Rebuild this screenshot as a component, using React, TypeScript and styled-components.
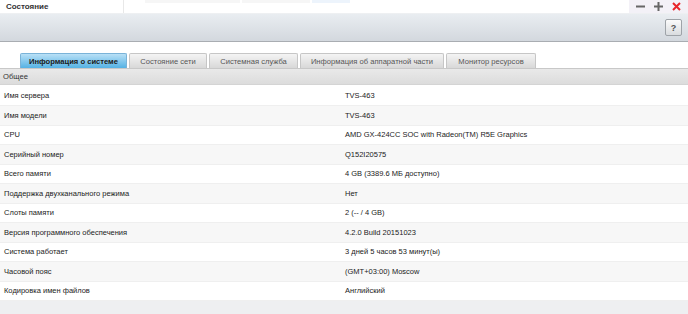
import React from "react";
import styled, { createGlobalStyle } from "styled-components";

const Global = createGlobalStyle`
  html, body { margin: 0; padding: 0; background: #ffffff; }
  body { font-family: "Liberation Sans", Arial, sans-serif; font-size: 8px; color: #222; }
  #root { width: 688px; height: 314px; overflow: hidden; }
`;

const Page = styled.div`
  width: 688px;
  height: 314px;
  display: flex;
  flex-direction: column;
  background: #eeeff1;
  overflow: hidden;
`;

const TitleBar = styled.div`
  height: 13px;
  display: flex;
  align-items: stretch;
  background: #fff;
  border-bottom: 1px solid #eef0f2;
`;

const TitleCell = styled.div`
  width: 117px;
  padding-left: 6px;
  display: flex;
  align-items: center;
  font-weight: bold;
  font-size: 8px;
  color: #333;
  border-right: 1px solid #e8e8e8;
`;

const TitleMiddle = styled.div`
  flex: 1;
  display: flex;
  align-items: flex-start;
  padding-left: 21px;
`;

const Strip = styled.div<{ $w: number; $c: string }>`
  width: ${(p) => p.$w}px;
  height: 3px;
  margin-right: 2px;
  background: ${(p) => p.$c};
`;

const WinControls = styled.div`
  width: 55px;
  display: flex;
  align-items: center;
  justify-content: space-around;
  background: #f3f1f7;
  padding: 0 2px;
`;

const Toolbar = styled.div`
  height: 27px;
  display: flex;
  align-items: center;
  justify-content: flex-end;
  padding-right: 6px;
  background: linear-gradient(#e9edf1, #d3d8de);
  border-bottom: 1px solid #a9adb2;
`;

const HelpButton = styled.div`
  width: 15px;
  height: 15px;
  border: 1px solid #9ea3a8;
  border-radius: 2px;
  background: linear-gradient(#fbfbfb, #d9dcdf);
  display: flex;
  align-items: center;
  justify-content: center;
  font-size: 9px;
  font-weight: bold;
  color: #555;
`;

const Content = styled.div`
  flex: 1;
  background: #fff;
  padding-top: 11px;
  display: flex;
  flex-direction: column;
`;

const Tabs = styled.div`
  display: flex;
  padding-left: 20px;
  gap: 2px;
  height: 15px;
`;

const Tab = styled.div<{ $active?: boolean; $w: number }>`
  width: ${(p) => p.$w}px;
  height: 15px;
  box-sizing: border-box;
  display: flex;
  align-items: center;
  justify-content: center;
  font-size: 7.6px;
  border: 1px solid ${(p) => (p.$active ? "#7ab3d8" : "#c6c6c6")};
  border-bottom: none;
  border-radius: 2px 2px 0 0;
  font-weight: ${(p) => (p.$active ? "bold" : "normal")};
  color: ${(p) => (p.$active ? "#1b1b1b" : "#555")};
  background: ${(p) =>
    p.$active
      ? "linear-gradient(#b9e0f6, #55b2e4)"
      : "linear-gradient(#f4f4f4, #d8d8d8)"};
`;

const SectionHeader = styled.div`
  height: 15px;
  display: flex;
  align-items: center;
  padding-left: 3px;
  font-size: 7.6px;
  color: #333;
  background: linear-gradient(#e9e9e9, #dcdcdc);
  border-top: 1px solid #c8c8c8;
  border-bottom: 1px solid #d4d4d4;
  margin-bottom: 1.5px;
`;

const Row = styled.div<{ $alt: boolean }>`
  height: 19.5px;
  box-sizing: border-box;
  display: grid;
  grid-template-columns: 345px 1fr;
  align-items: center;
  background: ${(p) => (p.$alt ? "#f7f7f7" : "#ffffff")};
  border-bottom: 1px solid #efefef;
  font-size: 7.5px;
  color: #222;
`;

const Label = styled.div`
  padding-left: 4px;
`;

const Value = styled.div``;

const Footer = styled.div`
  flex: 1;
  background: #eeeff1;
`;

const rows: [string, string][] = [
  ["Имя сервера", "TVS-463"],
  ["Имя модели", "TVS-463"],
  ["CPU", "AMD GX-424CC SOC with Radeon(TM) R5E Graphics"],
  ["Серийный номер", "Q152I20575"],
  ["Всего памяти", "4 GB (3389.6 МБ доступно)"],
  ["Поддержка двухканального режима", "Нет"],
  ["Слоты памяти", "2 (-- / 4 GB)"],
  ["Версия программного обеспечения", "4.2.0 Build 20151023"],
  ["Система работает", "3 дней 5 часов 53 минут(ы)"],
  ["Часовой пояс", "(GMT+03:00) Moscow"],
  ["Кодировка имен файлов", "Английский"],
];

const tabs: [string, number][] = [
  ["Информация о системе", 107],
  ["Состояние сети", 78],
  ["Системная служба", 89],
  ["Информация об аппаратной части", 144],
  ["Монитор ресурсов", 90],
];

export default function App() {
  return (
    <>
      <Global />
      <Page>
        <TitleBar>
          <TitleCell>Состояние</TitleCell>
          <TitleMiddle>
            <Strip $w={95} $c="#f6f6f6" />
            <Strip $w={68} $c="#f6f6f6" />
            <Strip $w={38} $c="#edf4fc" />
          </TitleMiddle>
          <WinControls>
            <svg width="9" height="9" viewBox="0 0 9 9">
              <rect x="0" y="3.5" width="9" height="2" fill="#666" />
            </svg>
            <svg width="9" height="9" viewBox="0 0 9 9">
              <rect x="0" y="3.5" width="9" height="2" fill="#666" />
              <rect x="3.5" y="0" width="2" height="9" fill="#666" />
            </svg>
            <svg width="9" height="9" viewBox="0 0 9 9">
              <path d="M1 1 L8 8 M8 1 L1 8" stroke="#e8252a" strokeWidth="2" />
            </svg>
          </WinControls>
        </TitleBar>
        <Toolbar>
          <HelpButton>?</HelpButton>
        </Toolbar>
        <Content>
          <Tabs>
            {tabs.map(([t, w], i) => (
              <Tab key={t} $w={w} $active={i === 0}>
                {t}
              </Tab>
            ))}
          </Tabs>
          <SectionHeader>Общее</SectionHeader>
          {rows.map(([l, v], i) => (
            <Row key={l} $alt={i % 2 === 1}>
              <Label>{l}</Label>
              <Value>{v}</Value>
            </Row>
          ))}
          <Footer />
        </Content>
      </Page>
    </>
  );
}
